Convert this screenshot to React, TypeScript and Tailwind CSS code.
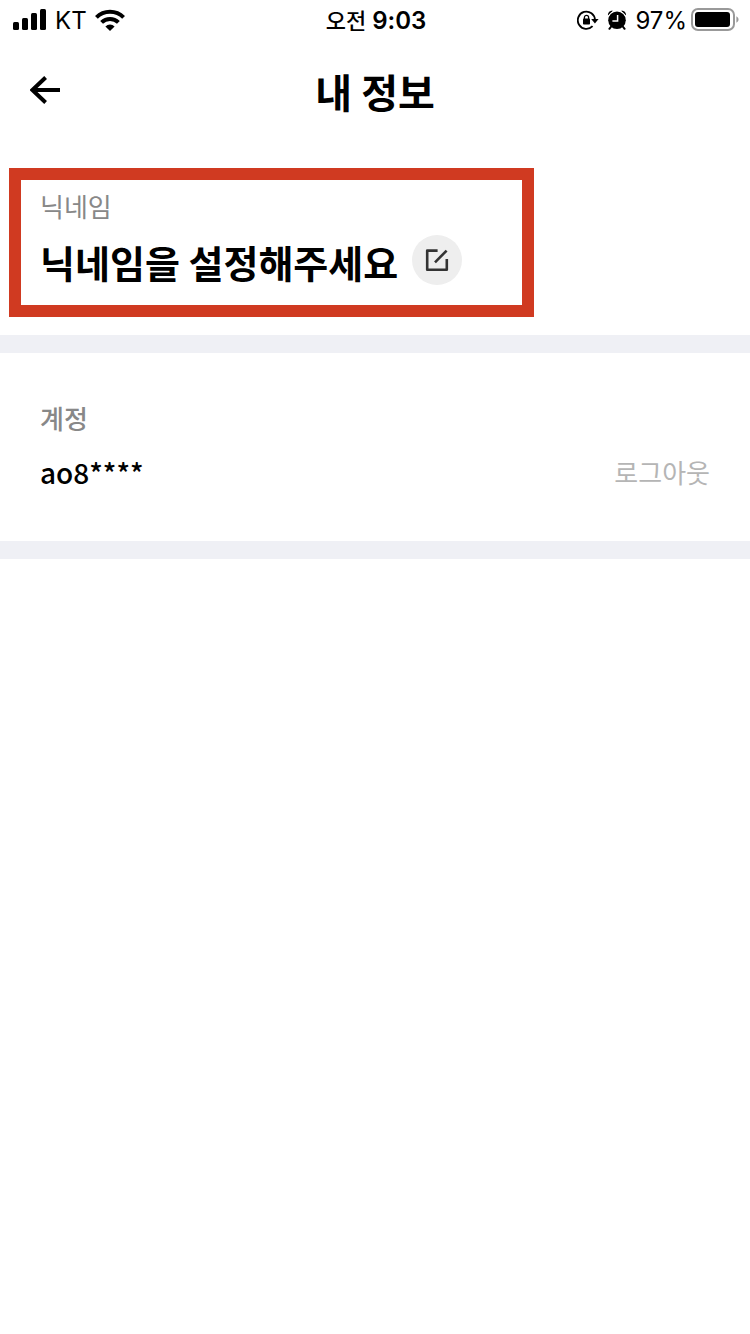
import React from "react";

const SignalIcon = () => (
  <svg width="34" height="22" viewBox="0 0 34 22" aria-hidden="true">
    <rect x="0" y="13" width="6" height="8" rx="1.5" />
    <rect x="9" y="9" width="6" height="12" rx="1.5" />
    <rect x="18" y="4" width="6" height="17" rx="1.5" />
    <rect x="27" y="0" width="6" height="21" rx="1.5" />
  </svg>
);

const WifiIcon = () => (
  <svg width="30" height="22" viewBox="0 0 30 22" aria-hidden="true">
    <g fill="none" stroke="#000" strokeWidth="4">
      <path d="M1.4 8.4a19.2 19.2 0 0 1 27.2 0" />
      <path d="M6.6 13.4a11.9 11.9 0 0 1 16.8 0" />
    </g>
    <path d="M15 22l-4.6-4.5a6.5 6.5 0 0 1 9.2 0z" />
  </svg>
);

const RotationLockIcon = () => (
  <svg width="22" height="20" viewBox="0 0 22 20" aria-hidden="true">
    <path
      d="M15.6 16.2A8.6 8.6 0 1 1 18 10"
      fill="none"
      stroke="#000"
      strokeWidth="1.8"
    />
    <path d="M14.2 9h7.4l-3.7 4.6z" />
    <rect x="6" y="8.6" width="7" height="6" rx="0.8" />
    <path
      d="M7.4 9.4V7.4a2.1 2.1 0 0 1 4.2 0v2"
      fill="none"
      stroke="#000"
      strokeWidth="1.3"
    />
  </svg>
);

const AlarmIcon = () => (
  <svg width="20" height="20" viewBox="0 0 20 20" aria-hidden="true">
    <circle cx="10" cy="10.2" r="8.8" />
    <path d="M1 5.6C.6 2.6 2.8.2 6 .8zM19 5.6C19.4 2.6 17.2.2 14 .8z" />
    <path
      d="M1.2 6.4Q3 2.8 6.6 1.2M18.8 6.4Q17 2.8 13.4 1.2"
      fill="none"
      stroke="#fff"
      strokeWidth="0.8"
    />
    <path
      d="M4.6 16l-2.2 2.8M15.4 16l2.2 2.8"
      fill="none"
      stroke="#000"
      strokeWidth="2"
      strokeLinecap="round"
    />
    <path d="M10.6 5v6H5.4" fill="none" stroke="#fff" strokeWidth="1.5" />
  </svg>
);

const BatteryIcon = () => (
  <svg width="48" height="24" viewBox="0 0 48 24" aria-hidden="true">
    <rect
      x="1"
      y="1"
      width="42"
      height="21"
      rx="6"
      fill="none"
      stroke="#999"
      strokeWidth="2"
    />
    <rect x="4" y="4" width="35" height="15" rx="3" />
    <path d="M45.4 8.2c2.8 1.6 2.8 5 0 6.6z" fill="#999" />
  </svg>
);

const BackIcon = () => (
  <svg width="30" height="28" viewBox="0 0 30 28" aria-hidden="true">
    <path
      d="M30 14H3M15.6 1.5L2.4 14l13.2 12.5"
      fill="none"
      stroke="#000"
      strokeWidth="4"
    />
  </svg>
);

const EditIcon = () => (
  <svg width="24" height="24" viewBox="0 0 24 24" aria-hidden="true">
    <g fill="none" stroke="#333" strokeWidth="2.6" strokeLinejoin="round">
      <path d="M12.6 2.6H2.2v19.2h19.6V11" />
      <path d="M10 14.4L21.6 2.6" />
    </g>
  </svg>
);

const StatusBar = () => (
  <div className="grid h-10 grid-cols-3 items-center pr-[11px] pl-[13px] font-['Inter','Noto_Sans_CJK_KR',sans-serif] text-2xl">
    <div className="flex items-center gap-2">
      <SignalIcon />
      <span className="pt-px">KT</span>
      <WifiIcon />
    </div>
    <time className="pt-px text-center font-semibold whitespace-nowrap">
      <span className="text-[22px] font-medium">오전</span> 9:03
    </time>
    <div className="flex items-center justify-end gap-2 whitespace-nowrap">
      <RotationLockIcon />
      <AlarmIcon />
      <div className="flex items-center gap-1">
        <span className="pt-px">97%</span>
        <BatteryIcon />
      </div>
    </div>
  </div>
);

interface ProfileProps {
  user: {
    nickname: string;
    account: string;
  };
}

const Profile = ({ user }: ProfileProps) => (
  <>
    <section className="border-b-18 border-[#eff0f5] pt-7 pr-10 pb-[18px] pl-[9px]">
      <div className="max-w-[525px] border-12 border-[#d03a21] px-[19px] pt-2 pb-[15px]">
        <h2 className="text-[26px] leading-9 text-[#888]">닉네임</h2>
        <div className="mt-[6px] flex items-center gap-[14px]">
          <strong className="pt-1 text-[38px] leading-14 font-bold whitespace-nowrap">
            {user.nickname}
          </strong>
          <button
            type="button"
            aria-label="닉네임 수정"
            className="flex size-[50px] shrink-0 items-center justify-center rounded-full bg-[#eee]"
          >
            <EditIcon />
          </button>
        </div>
      </div>
    </section>
    <section className="border-b-18 border-[#eff0f5] px-10 pt-[47px] pb-[49px]">
      <h2 className="text-[26px] leading-9 font-medium text-[#888]">계정</h2>
      <div className="mt-4 flex items-center justify-between">
        <span className="text-[28px] leading-10 font-medium">
          {user.account}
        </span>
        <button type="button" className="text-[26px] leading-10 text-[#b5b5b5]">
          로그아웃
        </button>
      </div>
    </section>
  </>
);

const App = () => {
  const user = { nickname: "닉네임을 설정해주세요", account: "ao8****" };

  return (
    <main className="min-h-screen bg-white font-['Noto_Sans_CJK_KR',sans-serif] text-black">
      <StatusBar />
      <header className="grid h-25 grid-cols-[1fr_auto_1fr] items-center px-[30px]">
        <button type="button" aria-label="뒤로 가기" className="w-fit">
          <BackIcon />
        </button>
        <h1 className="pt-[2px] text-[40px] leading-14 font-bold">내 정보</h1>
      </header>
      <Profile user={user} />
    </main>
  );
};

export default App;
